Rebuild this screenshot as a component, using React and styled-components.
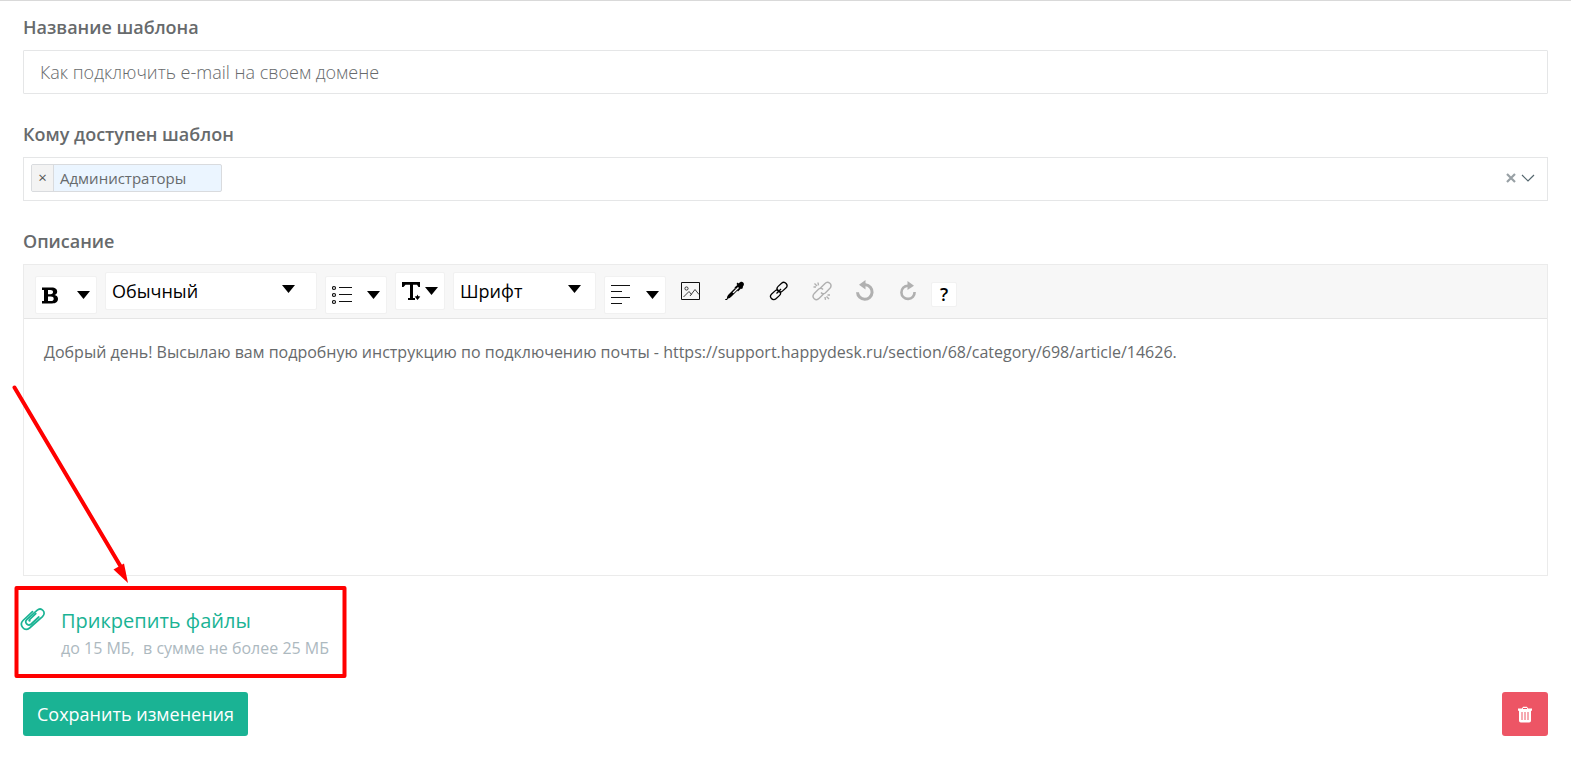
import React, { useState } from 'react'
import styled, { createGlobalStyle } from 'styled-components'

const GlobalStyle = createGlobalStyle`
  * {
    box-sizing: border-box;
  }
  body {
    margin: 0;
    background: #fff;
    color: #676a6c;
    font-family: 'Open Sans', 'Noto Sans', sans-serif;
    font-size: 16px;
  }
  button, input, select, textarea {
    font-family: inherit;
    margin: 0;
  }
`

const Form = styled.form`
  display: flex;
  flex-direction: column;
  padding: 14px 23px 36px;
  border-top: 1px solid #d9d9d9;
`

const Field = styled.div`
  display: flex;
  flex-direction: column;
  gap: 10px;
  margin-bottom: ${p => (p.$last ? 0 : 28)}px;
`
Field.Label = styled.label`
  font-size: 18px;
  line-height: 25px;
  font-weight: 600;
`
Field.Input = styled.input`
  width: 100%;
  height: 44px;
  padding: 0 16px;
  border: 1px solid #e5e6e7;
  border-radius: 1px;
  background: #fff;
  color: #676a6c;
  font-size: 18px;
  font-weight: 300;
  outline: none;
`

const Picker = styled.div`
  display: flex;
  align-items: center;
  height: 44px;
  padding: 0 12px 2px 7px;
  border: 1px solid #e5e6e7;
`
Picker.Search = styled.input`
  flex: 1;
  min-width: 0;
  border: 0;
  outline: none;
  background: transparent;
  font-size: 15px;
`
Picker.Action = styled.button`
  display: flex;
  padding: 0;
  border: 0;
  background: none;
  color: ${p => p.$color};
  margin-left: 4px;
`

const Tag = styled.span`
  display: flex;
  width: 191px;
  height: 28px;
  border: 1px solid #d9dbde;
  border-radius: 2px;
  background: #ebf5ff;
  font-size: 15px;
  line-height: 26px;
  overflow: hidden;
`
Tag.Remove = styled.button`
  width: 22px;
  padding: 0 0 2px;
  border: 0;
  border-right: 1px solid #d9dbde;
  background: #f3f3f3;
  color: #555;
  font-size: 15px;
  line-height: 20px;
`
Tag.Name = styled.span`
  padding: 0 6px;
`

const Editor = styled.div`
  display: flex;
  flex-direction: column;
  border: 1px solid #ebebeb;
`
Editor.Toolbar = styled.div`
  display: flex;
  align-items: flex-start;
  gap: 8px;
  min-height: 54px;
  padding: 7px 11px 4px;
  border-bottom: 1px solid #e5e5e5;
  background: #f7f7f7;
`
Editor.Text = styled.textarea`
  height: 256px;
  padding: 20px;
  border: 0;
  outline: none;
  resize: none;
  background: #fff;
  color: #676a6c;
  font-size: 16px;
  line-height: 26px;
`

const MenuButton = styled.button`
  display: flex;
  align-items: center;
  justify-content: space-between;
  width: ${p => p.$width}px;
  height: 38px;
  margin-top: ${p => (p.$low ? 4 : 0)}px;
  padding: 0 6px;
  border: 1px solid #f1f1f1;
  border-radius: 2px;
  background: #fff;
  color: #000;
`

const SelectBox = styled.div`
  display: grid;
  align-items: center;
  width: ${p => p.$width}px;
  height: 38px;
  border: 1px solid #f1f1f1;
  border-radius: 2px;
  background: #fff;

  select, svg {
    grid-area: 1 / 1;
  }
  select {
    width: 100%;
    height: 36px;
    padding: 0 6px;
    border: 0;
    outline: none;
    appearance: none;
    background: transparent;
    color: #000;
    font-size: 18px;
  }
  svg {
    justify-self: end;
    margin: 0 ${p => p.$inset}px 4px 0;
    pointer-events: none;
  }
`

const Tools = styled.div`
  display: flex;
  align-items: center;
  gap: 24px;
  height: 38px;
  margin-left: 7px;
`
Tools.Button = styled.button`
  display: flex;
  padding: 0;
  border: 0;
  background: none;
  color: ${p => (p.disabled ? '#b0b0b0' : '#000')};
`

const HelpButton = styled.button`
  width: 26px;
  height: 25px;
  margin: 10px 0 0 6px;
  padding: 0;
  border: 1px solid #f1f1f1;
  border-radius: 2px;
  background: #fff;
  color: #000;
  font-size: 18px;
  font-weight: 600;
  line-height: 23px;
`

const Attach = styled.section`
  position: relative;
  display: flex;
  align-items: flex-start;
  gap: 15px;
  margin: 29px 0 33px -3px;

  > svg:first-child {
    margin-top: 3px;
  }
`
Attach.Body = styled.div`
  display: flex;
  flex-direction: column;
`
Attach.Link = styled.a`
  color: #1ab394;
  font-size: 20px;
  line-height: 32px;
  text-decoration: none;
`
Attach.Hint = styled.span`
  color: #adb9bf;
  font-size: 16px;
  line-height: 22px;
  white-space: pre;
`
Attach.Highlight = styled.svg`
  position: absolute;
  left: -10px;
  top: -222px;
  pointer-events: none;
`

const Footer = styled.footer`
  display: flex;
  justify-content: space-between;
`
Footer.Button = styled.button`
  display: flex;
  align-items: center;
  justify-content: center;
  height: 44px;
  padding: 0 ${p => (p.$danger ? 15 : 14)}px;
  border: 0;
  border-radius: 3px;
  background: ${p => (p.$danger ? '#ed5565' : '#1ab394')};
  color: #fff;
  font-size: 18px;
`

const Caret = () => (
  <svg width="13" height="8" viewBox="0 0 13 8">
    <path d="M0 0h13L6.500 8z" fill="#000" />
  </svg>
)

const BoldIcon = () => (
  <svg width="17" height="17" viewBox="0 0 17 17">
    <path
      d="M0 .5h9.500c4 0 5.700 1.700 5.700 4 0 1.800-1 3-2.700 3.400 2.200.3 3.500 1.800 3.500 3.900 0 3-2.100 4.700-6 4.700H0V14h2V3H0zM6 3v4.200h2.500c1.800 0 2.500-.8 2.500-2.100S10.300 3 8.500 3zM6 9.500V14h2.800c2 0 2.900-.8 2.900-2.300s-.9-2.200-2.900-2.200z"
      fill="#000"
      fillRule="evenodd"
    />
  </svg>
)

const ListIcon = () => (
  <svg width="20" height="20" viewBox="0 0 20 20" fill="none" stroke="#111">
    <circle cx="2" cy="3" r="1.500" strokeWidth="1.200" />
    <circle cx="2" cy="10" r="1.500" strokeWidth="1.200" />
    <circle cx="2" cy="17" r="1.500" strokeWidth="1.200" />
    <path d="M7 2.500h13M7 9.500h13M7 16.500h13" />
  </svg>
)

const SizeIcon = () => (
  <svg width="19" height="19" viewBox="0 0 19 19">
    <path d="M0 0h18v5h-1.500L15 2.800h-4V16h2v2H6v-2h2V2.800H3.500L1.500 5H0z" fill="#000" />
    <path d="M15.500 12.500l.8 1.800 2 .2-2.800 3.500-2.800-3.500 2-.2z" fill="#000" />
  </svg>
)

const AlignIcon = () => (
  <svg width="19" height="20" viewBox="0 0 19 20" stroke="#111">
    <path d="M0 .5h19M0 6.500h11M0 12.500h19M0 18.500h11" />
  </svg>
)

const PictureIcon = () => (
  <svg width="20" height="20" viewBox="0 0 20 20" fill="none" stroke="#111">
    <path d="M.5 1.500h18v17H.5z" />
    <circle cx="5.500" cy="7.500" r="1.600" strokeWidth=".8" />
    <path d="M2.500 16l5.500-5.500 2.500 3M9 15l5-6.500 4 5" strokeWidth=".8" />
  </svg>
)

const PenIcon = () => (
  <svg width="20" height="20" viewBox="0 0 20 20">
    <path d="M0 18.500l2-1c-.2-2 .8-3.200 2-4.500l6-6 2.500 2.500-6 6c-1.300 1.300-2 2-3.500 2l-1 1.500H0z" fill="#000" />
    <path d="M9.500 6.500l5-4.500 3.500 3.500-5 5z" fill="#000" />
    <path d="M12.500 1.500l1 1c2-2 3.500-2 4.700-1s1 2.800-.7 4.500l.5 1-1.500 1L11.500 3z" fill="#000" />
    <path d="M7.500 11.500l5.500-5.500 1 1-5.500 5.300z" fill="#fff" />
  </svg>
)

const LinkIcon = () => (
  <svg width="19" height="20" viewBox="0 0 19 20" fill="none" stroke="currentColor" strokeWidth="1.300">
    <rect x="7.500" y="3" width="11" height="6.400" rx="3.200" transform="rotate(-42 13 6.200)" />
    <rect x="1" y="10.600" width="11" height="6.400" rx="3.200" transform="rotate(-42 6.500 13.800)" />
    <path d="M7.500 12.500l4.500-4.500" />
  </svg>
)

const UnlinkIcon = () => (
  <svg width="20" height="20" viewBox="0 0 20 20" fill="none" stroke="currentColor" strokeWidth="1.400">
    <path d="M8.500 7l4.300-4.300c3.200-3.200 8.500.6 4.900 4.900L13.300 12c-1.600 1-3.300.8-4.300-.5" />
    <path d="M11.500 13l-4.300 4.300c-3.200 3.200-8.500-.6-4.900-4.900L6.700 8c1.600-1 3.300-.8 4.300.5" />
    <path d="M6 1.500l.5 2.800M2.500 2.500L5 5M1.500 6h2.500M14.500 15.500L17 18M15.500 14h2.500M13 16l.5 2.800" />
  </svg>
)

const UndoIcon = () => (
  <svg width="19" height="22" viewBox="0 0 19 22">
    <path d="M9 4.700h.5a7.300 7.300 0 1 1-8 7.500" fill="none" stroke="currentColor" strokeWidth="3" />
    <path d="M9.500 0v9.500L3 4.800z" fill="currentColor" />
  </svg>
)

const RedoIcon = () => (
  <svg width="18" height="20" viewBox="0 0 18 20">
    <path d="M9 4.700a6.600 6.600 0 1 0 6.600 6.300" fill="none" stroke="currentColor" strokeWidth="2.600" />
    <path d="M8.500 0v9L15 4.700z" fill="currentColor" />
  </svg>
)

const ClipIcon = () => (
  <svg width="26" height="24" viewBox="0 0 26 24" fill="none" stroke="#1ab394" strokeWidth="1.700" strokeLinecap="round">
    <path d="M12.500 3.700L3 12.500c-4.200 4.300 1.200 11.800 6.600 7.500L22.500 8.600c4.500-4.300-1.300-9.900-5.500-6.200L7 11.400c-3.200 3 .8 7.400 4.200 4.600l7.600-7" />
    <path d="M15.800 5.700L9.500 11.500c-.8.800-.4 1.500.4 1.300" />
  </svg>
)

const TrashIcon = () => (
  <svg width="16" height="17" viewBox="0 0 16 17">
    <path d="M5 2.500L6 .8h4l1 1.700h4v2.200h-1v10q0 1.800-1.800 1.800H3.800Q2 16.500 2 14.700v-10H1V2.500z" fill="#fff" />
    <path d="M6 2.500h4M5 6v8M8 6v8M11 6v8" stroke="#ed5565" strokeWidth="1" />
  </svg>
)

const message =
  'Добрый день! Высылаю вам подробную инструкцию по подключению почты - https://support.happydesk.ru/section/68/category/698/article/14626.'

export default function App() {
  const [title, setTitle] = useState('Как подключить e-mail на своем домене')
  const [text, setText] = useState(message)

  return (
    <>
      <GlobalStyle />
      <Form onSubmit={e => e.preventDefault()}>
        <Field>
          <Field.Label htmlFor="title">Название шаблона</Field.Label>
          <Field.Input id="title" value={title} onChange={e => setTitle(e.target.value)} />
        </Field>

        <Field>
          <Field.Label htmlFor="access">Кому доступен шаблон</Field.Label>
          <Picker>
            <Tag>
              <Tag.Remove type="button" aria-label="Убрать">×</Tag.Remove>
              <Tag.Name>Администраторы</Tag.Name>
            </Tag>
            <Picker.Search id="access" />
            <Picker.Action type="button" aria-label="Очистить" $color="#98a0a5">
              <svg width="12" height="12" viewBox="0 0 12 12" stroke="currentColor" strokeWidth="2.200">
                <path d="M2 2l8 8M10 2l-8 8" />
              </svg>
            </Picker.Action>
            <Picker.Action type="button" aria-label="Открыть список" $color="#54666e">
              <svg width="14" height="12" viewBox="0 0 14 12" fill="none" stroke="currentColor" strokeWidth="1.200">
                <path d="M1 3l6 6 6-6" />
              </svg>
            </Picker.Action>
          </Picker>
        </Field>

        <Field $last>
          <Field.Label htmlFor="text">Описание</Field.Label>
          <Editor>
            <Editor.Toolbar>
              <MenuButton type="button" aria-label="Начертание" $width={62} $low>
                <BoldIcon />
                <Caret />
              </MenuButton>
              <SelectBox $width={212} $inset={21}>
                <select aria-label="Стиль">
                  <option>Обычный</option>
                </select>
                <Caret />
              </SelectBox>
              <MenuButton type="button" aria-label="Список" $width={62} $low>
                <ListIcon />
                <Caret />
              </MenuButton>
              <MenuButton type="button" aria-label="Размер" $width={50}>
                <SizeIcon />
                <Caret />
              </MenuButton>
              <SelectBox $width={143} $inset={14}>
                <select aria-label="Шрифт">
                  <option>Шрифт</option>
                </select>
                <Caret />
              </SelectBox>
              <MenuButton type="button" aria-label="Выравнивание" $width={62} $low>
                <AlignIcon />
                <Caret />
              </MenuButton>
              <Tools>
                <Tools.Button type="button" aria-label="Изображение"><PictureIcon /></Tools.Button>
                <Tools.Button type="button" aria-label="Цвет"><PenIcon /></Tools.Button>
                <Tools.Button type="button" aria-label="Ссылка"><LinkIcon /></Tools.Button>
                <Tools.Button type="button" aria-label="Удалить ссылку" disabled><UnlinkIcon /></Tools.Button>
                <Tools.Button type="button" aria-label="Отменить" disabled><UndoIcon /></Tools.Button>
                <Tools.Button type="button" aria-label="Повторить" disabled><RedoIcon /></Tools.Button>
              </Tools>
              <HelpButton type="button">?</HelpButton>
            </Editor.Toolbar>
            <Editor.Text id="text" spellCheck={false} value={text} onChange={e => setText(e.target.value)} />
          </Editor>
        </Field>

        <Attach>
          <ClipIcon />
          <Attach.Body>
            <Attach.Link href="#attach">Прикрепить файлы</Attach.Link>
            <Attach.Hint>{'до 15 МБ,  в сумме не более 25 МБ'}</Attach.Hint>
          </Attach.Body>
          <Attach.Highlight width="340" height="300" viewBox="0 0 340 300" fill="none" stroke="#f00" strokeWidth="4">
            <path d="M4.500 4.500L111 184" strokeLinecap="round" />
            <path d="M118 200l-14.500-13.500 10.500-6z" fill="#f00" stroke="none" />
            <rect x="6.500" y="205" width="328" height="88" strokeLinejoin="round" />
          </Attach.Highlight>
        </Attach>

        <Footer>
          <Footer.Button type="submit">Сохранить изменения</Footer.Button>
          <Footer.Button type="button" aria-label="Удалить" $danger>
            <TrashIcon />
          </Footer.Button>
        </Footer>
      </Form>
    </>
  )
}
